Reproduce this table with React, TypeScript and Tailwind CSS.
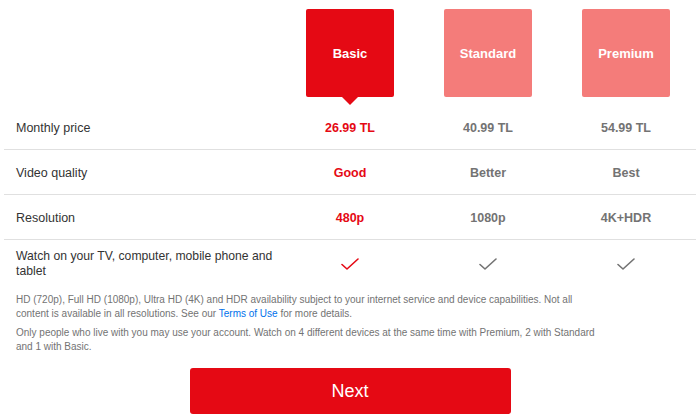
const plans = ["Basic", "Standard", "Premium"];

const rows = [
  { label: "Monthly price", values: ["26.99 TL", "40.99 TL", "54.99 TL"] },
  { label: "Video quality", values: ["Good", "Better", "Best"] },
  { label: "Resolution", values: ["480p", "1080p", "4K+HDR"] },
];

function Check({ active }: { active: boolean }) {
  return (
    <svg width="18" height="12" viewBox="0 0 18 12" fill="none">
      <path
        d="M1 6.5 L6 11 L17 1"
        stroke={active ? "#e50914" : "#737373"}
        strokeWidth="1.6"
        strokeLinecap="round"
        strokeLinejoin="round"
      />
    </svg>
  );
}

export default function App() {
  return (
    <div className="w-[700px] h-[420px] bg-white overflow-hidden px-[4px] font-['Liberation_Sans',Arial,sans-serif] text-[#333]">
      {/* Plan boxes */}
      <div className="grid grid-cols-[277px_138px_138px_138px] pt-[9px]">
        <div />
        {plans.map((p, i) => (
          <div key={p} className="flex justify-center">
            <div
              className={`relative w-[88px] h-[88px] rounded-[2px] flex items-center justify-center text-white text-[13px] font-bold pt-[2px] ${
                i === 0 ? "bg-[#e50914]" : "bg-[#f47c7a]"
              }`}
            >
              {p}
              {i === 0 && (
                <span className="absolute left-1/2 -translate-x-1/2 top-full w-0 h-0 border-l-[8px] border-r-[8px] border-t-[8px] border-l-transparent border-r-transparent border-t-[#e50914]" />
              )}
            </div>
          </div>
        ))}
      </div>

      {/* Comparison table */}
      <div className="mt-[8px]">
        {rows.map((r) => (
          <div
            key={r.label}
            className="grid grid-cols-[277px_138px_138px_138px] h-[45px] pt-[2px] items-center border-b border-[#e0e0e0]"
          >
            <div className="pl-[12px] text-[12.5px]">{r.label}</div>
            {r.values.map((v, i) => (
              <div
                key={v}
                className={`text-center text-[12.5px] font-bold ${i === 0 ? "text-[#e50914]" : "text-[#737373]"}`}
              >
                {v}
              </div>
            ))}
          </div>
        ))}
        <div className="grid grid-cols-[277px_138px_138px_138px] items-center pt-[9px]">
          <div className="pl-[12px] text-[12.2px] leading-[15px]">
            Watch on your TV, computer, mobile phone and tablet
          </div>
          {plans.map((p, i) => (
            <div key={p} className="flex justify-center">
              <Check active={i === 0} />
            </div>
          ))}
        </div>
      </div>

      {/* Notes */}
      <div className="pl-[12px] w-[596px] mt-[14px] text-[10px] leading-[14px] text-[#737373] space-y-[5px]">
        <p>
          HD (720p), Full HD (1080p), Ultra HD (4K) and HDR availability subject to your internet service and device
          capabilities. Not all content is available in all resolutions. See our{" "}
          <span className="text-[#0071eb]">Terms of Use</span> for more details.
        </p>
        <p>
          Only people who live with you may use your account. Watch on 4 different devices at the same time with
          Premium, 2 with Standard and 1 with Basic.
        </p>
      </div>

      <div className="flex justify-center mt-[14px]">
        <button className="w-[321px] h-[46px] rounded-[3px] bg-[#e50914] text-white text-[18px]">Next</button>
      </div>
    </div>
  );
}
